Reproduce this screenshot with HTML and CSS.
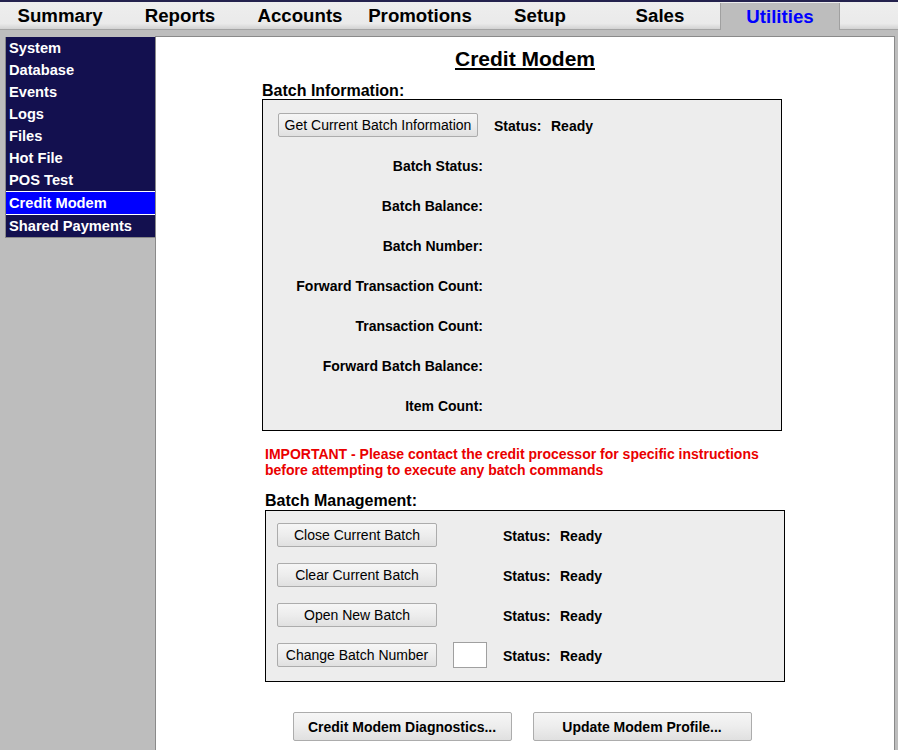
FILE: index.html
```html
<!DOCTYPE html>
<html>
<head>
    <title>Credit Modem</title>
    <link rel="stylesheet" href="styles.css">
</head>
<body>
    <div class="topLine"></div>
    <div class="tabBar">
        <div class="tab">Summary</div>
        <div class="tab">Reports</div>
        <div class="tab">Accounts</div>
        <div class="tab">Promotions</div>
        <div class="tab">Setup</div>
        <div class="tab">Sales</div>
        <div class="tab activeTab">Utilities</div>
        <div class="tabFill"></div>
    </div>

    <div class="main">
        <div class="sideMenu">
            <div class="menuItem">System</div>
            <div class="menuItem">Database</div>
            <div class="menuItem">Events</div>
            <div class="menuItem">Logs</div>
            <div class="menuItem">Files</div>
            <div class="menuItem">Hot File</div>
            <div class="menuItem">POS Test</div>
            <div class="menuItem activeItem">Credit Modem</div>
            <div class="menuItem">Shared Payments</div>
        </div>

        <div class="content">
            <div class="pageTitle">Credit Modem</div>

            <div class="column">
                <div class="sectionTitle">Batch Information:</div>
                <div class="box infoBox">
                    <div><button class="btn getInfoBtn">Get Current Batch Information</button></div>
                    <div class="status"><span class="statusLabel">Status:</span><span>Ready</span></div>

                    <div class="infoLabel">Batch Status:</div><div></div>
                    <div class="infoLabel">Batch Balance:</div><div></div>
                    <div class="infoLabel">Batch Number:</div><div></div>
                    <div class="infoLabel">Forward Transaction Count:</div><div></div>
                    <div class="infoLabel">Transaction Count:</div><div></div>
                    <div class="infoLabel">Forward Batch Balance:</div><div></div>
                    <div class="infoLabel">Item Count:</div><div></div>
                </div>

                <div class="lowerPart">
                    <div class="warning">IMPORTANT - Please contact the credit processor for specific instructions before attempting to execute any batch commands</div>

                    <div class="sectionTitle">Batch Management:</div>
                    <div class="box manageBox">
                        <button class="btn manageBtn">Close Current Batch</button>
                        <div class="status statusCell"><span class="statusLabel">Status:</span><span>Ready</span></div>

                        <button class="btn manageBtn">Clear Current Batch</button>
                        <div class="status statusCell"><span class="statusLabel">Status:</span><span>Ready</span></div>

                        <button class="btn manageBtn">Open New Batch</button>
                        <div class="status statusCell"><span class="statusLabel">Status:</span><span>Ready</span></div>

                        <button class="btn manageBtn">Change Batch Number</button>
                        <input type="text" class="batchInput">
                        <div class="status statusCell"><span class="statusLabel">Status:</span><span>Ready</span></div>
                    </div>
                </div>

                <div class="bottomButtons">
                    <button class="btn bigBtn">Credit Modem Diagnostics...</button>
                    <button class="btn bigBtn">Update Modem Profile...</button>
                </div>
            </div>
        </div>
    </div>
</body>
</html>
```

FILE: styles.css
```css
body {
    font-family: "Liberation Sans", Arial, sans-serif;
    background-color: #bdbdbd;
    margin: 0;
    overflow: hidden;
}

.topLine {
    height: 2px;
    background-color: #24224e;
}

.tabBar {
    display: flex;
    height: 28px;
    background-color: #ececec;
}

.tab {
    box-sizing: border-box;
    width: 120px;
    height: 28px;
    padding-top: 1px;
    line-height: 26px;
    text-align: center;
    font-size: 18.67px;
    font-weight: bold;
    color: #000;
    background: linear-gradient(to bottom, #eeeeee 0%, #eaeaea 80%, #d2d2d2 100%);
    border-bottom: 1px solid #a4a4a4;
}

.activeTab {
    margin-top: 1px;
    height: 27px;
    padding-top: 0;
    line-height: 27px;
    color: #0000ff;
    background: #bdbdbd;
    border-left: 1px solid #a0a0a0;
    border-right: 1px solid #a0a0a0;
    border-bottom: none;
}

.tabFill {
    flex: 1;
    background: linear-gradient(to bottom, #eeeeee 0%, #eaeaea 80%, #d2d2d2 100%);
    border-bottom: 1px solid #a4a4a4;
}

.main {
    display: flex;
    align-items: flex-start;
    padding: 6px 3px 0 5px;
}

.sideMenu {
    box-sizing: border-box;
    width: 150px;
    margin-top: 1px;
    background-color: #13104f;
    border-left: 1px solid #888;
    border-bottom: 1px solid #888;
}

.menuItem {
    height: 22px;
    line-height: 22px;
    padding-left: 3px;
    font-size: 14.67px;
    font-weight: bold;
    color: white;
}

.activeItem {
    background-color: #0000ff;
    border-top: 1px solid white;
    border-bottom: 1px solid white;
}

.content {
    flex: 1;
    min-height: 760px;
    background-color: white;
    border: 1px solid #8a8a8a;
    padding-top: 10px;
}

.pageTitle {
    text-align: center;
    font-size: 21px;
    line-height: 24px;
    font-weight: bold;
    text-decoration: underline;
}

.column {
    width: 520px;
    margin-left: 106px;
}

.sectionTitle {
    margin-top: 11px;
    font-size: 16px;
    line-height: 17px;
    font-weight: bold;
}

.box {
    box-sizing: border-box;
    width: 520px;
    border: 1px solid #000;
    background-color: #ededed;
}

.btn {
    box-sizing: border-box;
    height: 24px;
    padding: 0;
    font-family: "Liberation Sans", Arial, sans-serif;
    font-size: 14px;
    color: #000;
    background: linear-gradient(to bottom, #f6f6f6 0%, #ededed 50%, #e0e0e0 100%);
    border: 1px solid #acacac;
    border-radius: 2px;
}

.infoBox {
    display: grid;
    grid-template-columns: 205px auto;
    grid-auto-rows: 40px;
    column-gap: 11px;
    align-items: center;
    padding: 5px 0 5px 15px;
}

.getInfoBtn {
    width: 200px;
}

.infoLabel {
    padding-top: 2px;
    text-align: right;
    font-size: 14px;
    font-weight: bold;
}

.status {
    padding-top: 2px;
    font-size: 14px;
    font-weight: bold;
}

.statusLabel {
    display: inline-block;
    width: 57px;
}

.lowerPart {
    margin-left: 3px;
}

.warning {
    width: 515px;
    margin-top: 15px;
    font-size: 14px;
    line-height: 16px;
    font-weight: bold;
    color: #ea0000;
}

.lowerPart .sectionTitle {
    margin-top: 14px;
}

.manageBox {
    display: grid;
    grid-template-columns: 160px 34px auto;
    grid-auto-rows: 40px;
    column-gap: 16px;
    align-items: center;
    margin-top: 1px;
    padding: 4px 0 6px 11px;
}

.manageBtn {
    grid-column: 1;
    width: 160px;
}

.batchInput {
    grid-column: 2;
    box-sizing: border-box;
    width: 34px;
    height: 26px;
    border: 1px solid #a0a0a0;
    background-color: white;
}

.statusCell {
    grid-column: 3;
}

.bottomButtons {
    display: flex;
    justify-content: center;
    gap: 21px;
    margin-top: 30px;
}

.bigBtn {
    width: 219px;
    height: 29px;
    font-size: 14px;
    font-weight: bold;
}
```
